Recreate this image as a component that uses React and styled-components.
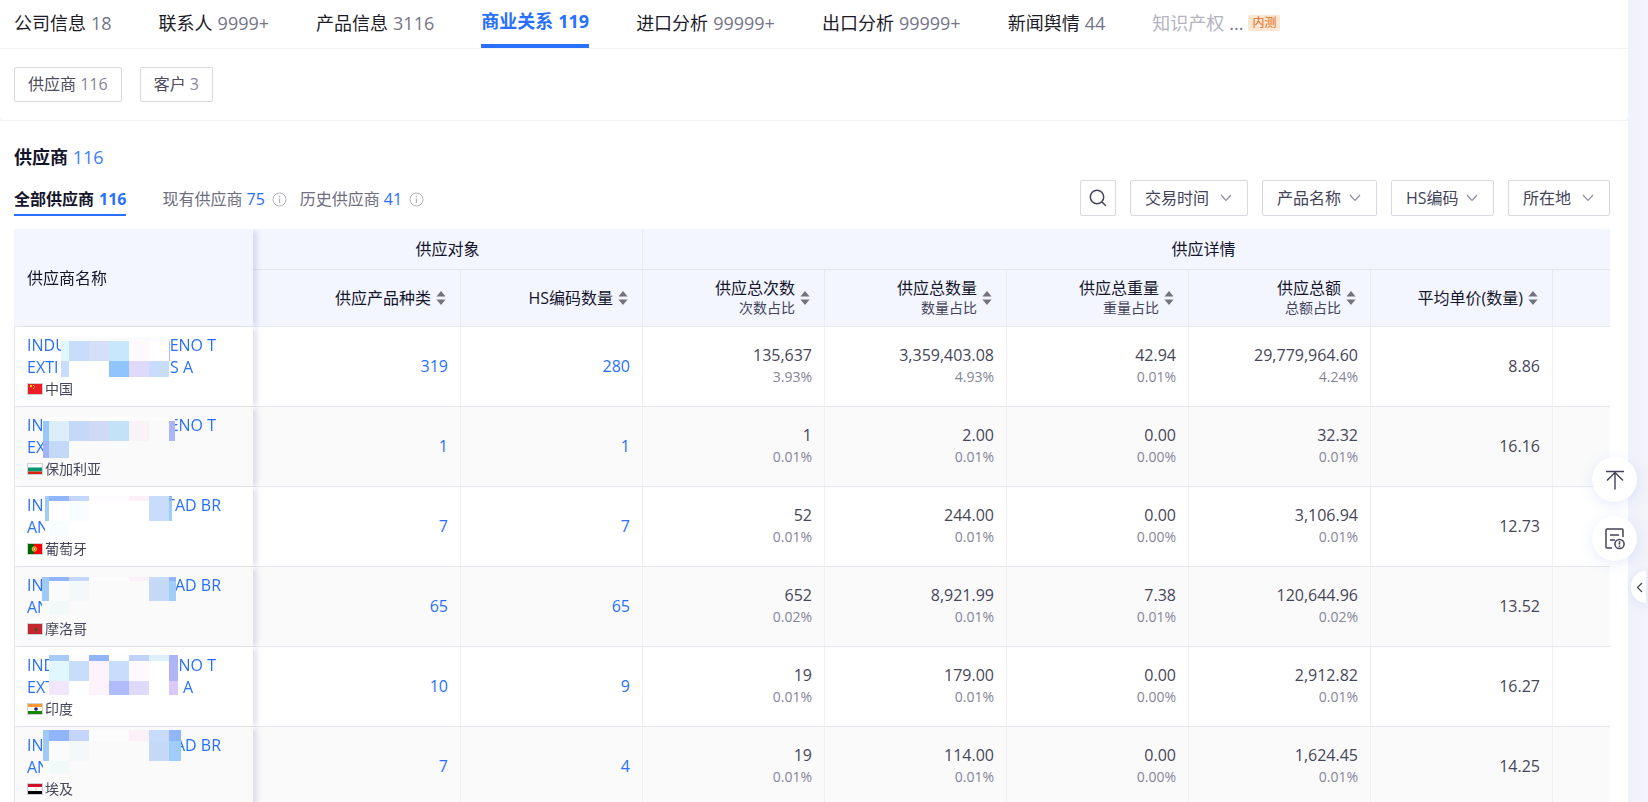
import React from "react";
import styled, { createGlobalStyle, css } from "styled-components";

const GlobalStyle = createGlobalStyle`
  *, *::before, *::after { box-sizing: border-box; }
  html, body { margin: 0; height: 100%; }
  body {
    background: #f1f3fa;
    color: #14142b;
    font: 400 16px/22px "Open Sans", "Noto Sans CJK SC", sans-serif;
  }
  #root { height: 100%; }
  button, select { font: inherit; color: inherit; margin: 0; }
  a { color: inherit; text-decoration: none; }
`;

const Page = styled.div`
  height: 100vh;
  padding-right: 18px;
  border-right: 2px solid #f3f3f8;
  overflow: hidden auto;
  scrollbar-width: none;
`;

const TopPanel = styled.header`
  background: #fff;
  border-bottom: 1px solid #f3f3f5;
  border-radius: 0 0 4px 4px;
`;

const Tabs = styled.nav`
  display: flex;
  gap: 47px;
  height: 49px;
  padding: 0 14px;
  border-bottom: 1px solid #f3f3f5;
  font-size: 18px;
  white-space: nowrap;
`;

const Tab = styled.a`
  display: flex;
  align-items: center;
  gap: 5px;
  height: 48px;
  padding-bottom: 2px;
  color: ${(p) => (p.$disabled ? "#b3b3c2" : "#1c1c28")};
  ${(p) =>
    p.$active &&
    css`
      color: #2970ff;
      font-weight: 700;
      border-bottom: 4px solid #2970ff;
    `}
`;

const TabCount = styled.span`
  color: ${(p) => (p.$active ? "#2970ff" : "#757589")};
`;

const Badge = styled.span`
  padding: 0 4px;
  border-radius: 2px;
  background: #fde6d2;
  color: #e06c12;
  font-size: 12px;
  line-height: 16px;
`;

const Chips = styled.div`
  display: flex;
  gap: 18px;
  padding: 18px 14px;
`;

const Chip = styled.button`
  height: 35px;
  padding: 0 13px 2px;
  border: 1px solid #d9d9df;
  border-radius: 2px;
  background: #fff;
  color: #4d4d5c;
  cursor: pointer;
  span { color: #86869a; }
`;

const Panel = styled.main`
  background: #fff;
  padding: 24px 18px 0 14px;
`;

const Title = styled.h2`
  margin: 0;
  font-size: 18px;
  line-height: 24px;
  font-weight: 700;
  span { color: #3d7eff; font-weight: 400; }
`;

const Toolbar = styled.div`
  display: flex;
  justify-content: space-between;
  margin: 11px 0 13px;
`;

const SubTabs = styled.div`
  display: flex;
  align-items: flex-start;
  padding-top: 6px;
`;

const SubTab = styled.button`
  display: flex;
  align-items: center;
  gap: ${(p) => (p.$active ? 5 : 4)}px;
  height: 30px;
  margin-right: ${(p) => (p.$active ? 36 : 13)}px;
  padding: 0 0 2px;
  border: 0;
  border-bottom: 2px solid ${(p) => (p.$active ? "#2970ff" : "transparent")};
  background: none;
  color: ${(p) => (p.$active ? "#14142b" : "#6e6e80")};
  font-weight: ${(p) => (p.$active ? 700 : 400)};
  white-space: nowrap;
  cursor: pointer;
  span { color: #2970ff; }
  svg { margin-left: 3px; }
`;

const Filters = styled.div`
  display: flex;
  gap: 14px;
`;

const boxed = css`
  height: 36px;
  border: 1px solid #d8d8e2;
  border-radius: 2px;
  background: #fff;
`;

const SearchButton = styled.button`
  ${boxed}
  display: grid;
  place-items: center;
  width: 36px;
  padding: 0;
  cursor: pointer;
`;

const FilterBox = styled.label`
  ${boxed}
  display: grid;
  align-items: center;
  color: #43435a;
  > * { grid-area: 1 / 1; }
  svg { justify-self: end; margin-right: 15px; pointer-events: none; }
`;

const FilterSelect = styled.select`
  appearance: none;
  height: 34px;
  padding: 0 ${(p) => (p.$roomy ? 37 : 34)}px 0 14px;
  border: 0;
  background: transparent;
  cursor: pointer;
`;

const TableScroll = styled.div`
  overflow-x: auto;
  scrollbar-width: none;
`;

const Table = styled.table`
  width: 1751px;
  table-layout: fixed;
  border-collapse: separate;
  border-spacing: 0;
`;

const Th = styled.th`
  height: ${(p) => (p.$group ? 41 : 57)}px;
  padding: 0 14px;
  border-right: 1px solid #e8ebf5;
  border-bottom: 1px solid #e4e6f0;
  background: #f3f6ff;
  font-weight: 400;
  text-align: ${(p) => (p.$group ? "center" : "right")};
`;

const pinned = css`
  position: sticky;
  left: 0;
  z-index: 1;
  padding: 0 13px;
  border-right: 0;
  text-align: left;
  box-shadow: 6px 0 5px -2px rgba(70, 85, 140, 0.17);
`;

const PinnedTh = styled(Th)`${pinned}`;

const Row = styled.tr`
  background: ${(p) => (p.$striped ? "#fafafa" : "#fff")};
`;

const Td = styled.td`
  height: 80px;
  padding: 0 12px 2px;
  border-right: 1px solid #f0f0f4;
  border-bottom: 1px solid #e6e6ec;
  text-align: right;
  color: #46465a;
  a { color: #2970ff; }
`;

const PinnedTd = styled(Td)`
  ${pinned}
  padding-left: 12px;
  border-left: 1px solid #e6e6ec;
  background: inherit;
`;

const HeadCell = styled.div`
  display: flex;
  align-items: center;
  justify-content: flex-end;
  gap: 5px;
`;

const SortButton = styled.button`
  display: flex;
  padding: 0;
  border: 0;
  background: none;
  cursor: pointer;
`;

const HeadLabel = styled.div`
  line-height: 20px;
`;

const SubLine = styled.div`
  font-size: 14px;
  line-height: ${(p) => (p.$head ? 20 : 22)}px;
  color: ${(p) => (p.$head ? "#43435a" : "#85859a")};
`;

const Name = styled.a`
  display: block;
  position: relative;
`;

const NameLine = styled.span`
  display: flex;
  justify-content: space-between;
  width: ${(p) => p.$w}px;
  height: 22px;
`;

const Mosaic = styled.svg`
  position: absolute;
  left: 0;
  top: -5px;
`;

const Country = styled.div`
  display: flex;
  align-items: center;
  gap: 2px;
  font-size: 14px;
`;

const FloatBar = styled.aside`
  position: fixed;
  right: 11px;
  top: 457px;
  z-index: 3;
  display: grid;
  gap: 14px;
`;

const FloatButton = styled.button`
  display: grid;
  place-items: center;
  width: 45px;
  height: 45px;
  padding: 0;
  border: 0;
  border-radius: 50%;
  background: #fff;
  box-shadow: 0 3px 14px rgba(80, 120, 230, 0.14);
  cursor: pointer;
`;

const Drawer = styled.button`
  position: fixed;
  right: 2px;
  top: 571px;
  z-index: 2;
  display: grid;
  place-items: center end;
  width: 15px;
  height: 32px;
  padding: 0 3px 0 0;
  border: 0;
  border-radius: 16px 0 0 16px;
  background: #fff;
  box-shadow: 0 2px 10px rgba(80, 120, 230, 0.14);
  cursor: pointer;
`;

const Info = () => (
  <svg width="15" height="15" viewBox="0 0 15 15" fill="none" stroke="#b3b3c0">
    <circle cx="7.5" cy="7.5" r="6.5" />
    <path d="M7.5 6.5v4.5M7.5 3.8v1.4" strokeWidth="1.2" />
  </svg>
);

const Chevron = () => (
  <svg width="12" height="8" viewBox="0 0 12 8" fill="none" stroke="#8d8d9f" strokeWidth="1.2">
    <path d="M1 1l5 5.4L11 1" />
  </svg>
);

const SortIcon = () => (
  <svg width="10" height="14" viewBox="0 0 10 14" fill="#73737f">
    <path d="M5 0l4.6 5.6H.4zM5 14L.4 8.4h9.2z" />
  </svg>
);

const flags = {
  cn: (
    <>
      <path fill="#ee1c25" d="M0 0h14v10H0z" />
      <path fill="#ffde00" d="M2 1h2v2H2zM5 1h1v1H5zM6 2.500h1v1H6zM5 4h1v1H5z" />
    </>
  ),
  bg: (
    <>
      <path fill="#fff" d="M0 0h14v3.500H0z" />
      <path fill="#00966e" d="M0 3.500h14v4H0z" />
      <path fill="#d62612" d="M0 7.500h14V10H0z" />
    </>
  ),
  pt: (
    <>
      <path fill="#f00" d="M0 0h14v10H0z" />
      <path fill="#060" d="M0 0h6v10H0z" />
      <circle cx="6.300" cy="5" r="2.200" fill="#ef4a2a" stroke="#e6dc20" />
      <path fill="#fff" d="M5.800 4h1v2h-1z" />
    </>
  ),
  ma: (
    <>
      <path fill="#c1272d" d="M0 0h14v10H0z" />
      <path fill="#4b4a2e" d="M8 3l.8 1.500 1 .5-.8.800-.2 1.700-1-.8-1.200.3.400-1.700-.6-.8h1.200z" />
    </>
  ),
  in: (
    <>
      <path fill="#fff" d="M0 0h14v10H0z" />
      <path fill="#f93" d="M0 0h14v3H0z" />
      <path fill="#138808" d="M0 7h14v3H0z" />
      <circle cx="8" cy="5" r="1.800" fill="#1b1b7c" />
    </>
  ),
  eg: (
    <>
      <path fill="#fff" d="M0 0h14v10H0z" />
      <path fill="#ce1126" d="M0 0h14v3H0z" />
      <path d="M0 7h14v3H0z" />
      <path fill="#f0dfae" d="M7 4h2v2.500H7z" />
    </>
  ),
};

const Flag = ({ code }) => (
  <svg width="16" height="12" viewBox="-1 -1 16 12">
    {flags[code]}
    <rect x="-.5" y="-.5" width="15" height="11" fill="none" stroke="#cfcfd6" />
  </svg>
);

/* Each band is [top, bottom, [x, colour], ..., end x]; a colour runs to the next x. */
const Mask = ({ bands }) => (
  <Mosaic width="170" height="60" viewBox="0 -6 170 60" shapeRendering="crispEdges" aria-hidden="true">
    {bands.flatMap(([y0, y1, stops, end]) =>
      stops.map(([x, fill], i) => (
        <rect
          key={y0 + "-" + x}
          x={x}
          y={y0}
          width={(i + 1 < stops.length ? stops[i + 1][0] : end) - x}
          height={y1 - y0}
          fill={fill}
        />
      ))
    )}
  </Mosaic>
);

const suppliers = [
  {
    top: ["INDU", "ENO T", 189], bottom: ["EXTI", "S A", 166], flag: "cn", country: "中国",
    kinds: "319", codes: "280", stats: [["135,637", "3.93%"], ["3,359,403.08", "4.93%"], ["42.94", "0.01%"], ["29,779,964.60", "4.24%"]], price: "8.86",
    bands: [
      [2, 6, [[34, "#fafbff"]], 143],
      [6, 26, [[34, "#e0f7fe"], [42, "#c8dcfb"], [62, "#d6dffa"], [82, "#c8e7fc"], [102, "#fef9fd"], [122, "#fff"], [142, "#b4b9f8"]], 143],
      [26, 42, [[34, "#c8dcfb"], [42, "#fff"], [62, "#fffffe"], [82, "#90c4fc"], [102, "#e0dafa"], [122, "#c8dcfb"]], 142],
    ],
  },
  {
    top: ["IN", "ENO T", 189], bottom: ["EX", "", 166], flag: "bg", country: "保加利亚",
    kinds: "1", codes: "1", stats: [["1", "0.01%"], ["2.00", "0.01%"], ["0.00", "0.00%"], ["32.32", "0.01%"]], price: "16.16",
    bands: [
      [2, 6, [[16, "#fcfcfc"]], 148],
      [6, 26, [[16, "#97c8f9"], [22, "#dceefa"], [42, "#c4d8f8"], [62, "#d0daf6"], [82, "#c3e2f8"], [102, "#f9f3f7"], [122, "#fafafa"], [142, "#aeb5f7"]], 148],
      [26, 43, [[16, "#a0b5f6"], [22, "#c4d8f8"], [42, "#fafafa"]], 142],
    ],
  },
  {
    top: ["IN", "TAD BR", 194], bottom: ["AN", "", 166], flag: "pt", country: "葡萄牙",
    kinds: "7", codes: "7", stats: [["52", "0.01%"], ["244.00", "0.01%"], ["0.00", "0.00%"], ["3,106.94", "0.01%"]], price: "12.73",
    bands: [
      [1, 6, [[18, "#9fcdfa"], [22, "#90b6f9"], [42, "#c4d6fb"], [62, "#fdfbfd"], [102, "#fcf0fb"], [122, "#c8dcfb"], [142, "#90b6f9"]], 145],
      [6, 26, [[18, "#9fcdfa"], [22, "#fff"], [42, "#f8feff"], [62, "#fff"], [122, "#c8dcfb"], [142, "#9fcdfa"]], 145],
      [26, 41, [[18, "#fff"], [22, "#f8feff"], [42, "#fff"]], 145],
    ],
  },
  {
    top: ["IN", "AD BR", 194], bottom: ["AN", "", 166], flag: "ma", country: "摩洛哥",
    kinds: "65", codes: "65", stats: [["652", "0.02%"], ["8,921.99", "0.01%"], ["7.38", "0.01%"], ["120,644.96", "0.02%"]], price: "13.52",
    bands: [
      [2, 6, [[15, "#9fcaf7"], [22, "#90b6f9"], [42, "#c4d6fb"], [62, "#fcfcfd"], [102, "#fcf0f9"], [122, "#c8dbfa"], [142, "#90b6f9"]], 149],
      [6, 26, [[15, "#9fcaf7"], [22, "#fafbfb"], [42, "#f3f9fa"], [62, "#fafafa"], [122, "#c4d8f8"], [142, "#a0ccf8"]], 149],
      [26, 40, [[15, "#fafafa"], [22, "#f2f9f9"], [42, "#fafafa"]], 149],
    ],
  },
  {
    top: ["IND", "NO T", 189], bottom: ["EXT", "A", 166], flag: "in", country: "印度",
    kinds: "10", codes: "9", stats: [["19", "0.01%"], ["179.00", "0.01%"], ["0.00", "0.00%"], ["2,912.82", "0.01%"]], price: "16.27",
    bands: [
      [0, 6, [[22, "#a6cbf8"], [42, "#fdfdfe"], [62, "#90b6f9"], [82, "#fdfcff"], [102, "#c0d2fa"], [122, "#dff0fd"], [142, "#aeb5f7"]], 151],
      [6, 26, [[22, "#e0f7fe"], [42, "#c8dcfb"], [62, "#fef3fc"], [82, "#c8dcfb"], [102, "#fef9fd"], [122, "#fff"], [142, "#b0b5f8"]], 151],
      [26, 40, [[22, "#f2e6fa"], [42, "#fff"], [62, "#fef3fc"], [82, "#b0bcfa"], [102, "#e0dafa"], [122, "#fff"], [142, "#dac8f9"]], 151],
    ],
  },
  {
    top: ["IN", "AD BR", 194], bottom: ["AN", "", 166], flag: "eg", country: "埃及",
    kinds: "7", codes: "4", stats: [["19", "0.01%"], ["114.00", "0.01%"], ["0.00", "0.00%"], ["1,624.45", "0.01%"]], price: "14.25",
    bands: [
      [-5, 6, [[16, "#9fcaf7"], [22, "#90b6f9"], [42, "#c4d4fb"], [62, "#fcfcfd"], [102, "#fcf0f9"], [122, "#c8dbfa"], [142, "#90b6f9"]], 154],
      [6, 26, [[16, "#9fcaf7"], [22, "#fafbfb"], [42, "#f3f9fa"], [62, "#fafafa"], [122, "#c4d8f8"], [142, "#a0ccf8"]], 154],
      [26, 38, [[16, "#fafafa"], [22, "#f2f9f9"], [42, "#fafafa"]], 154],
    ],
  },
];

const tabs = [
  ["公司信息", "18"],
  ["联系人", "9999+"],
  ["产品信息", "3116"],
  ["商业关系", "119", true],
  ["进口分析", "99999+"],
  ["出口分析", "99999+"],
  ["新闻舆情", "44"],
];

const columns = [
  ["供应产品种类"],
  ["HS编码数量"],
  ["供应总次数", "次数占比"],
  ["供应总数量", "数量占比"],
  ["供应总重量", "重量占比"],
  ["供应总额", "总额占比"],
  ["平均单价(数量)"],
];

const filters = [["交易时间", true], ["产品名称"], ["HS编码"], ["所在地", true]];

const Supplier = ({ data, striped }) => (
  <Row $striped={striped}>
    <PinnedTd>
      <Name href="#">
        <NameLine $w={data.top[2]}><span>{data.top[0]}</span><span>{data.top[1]}</span></NameLine>
        <NameLine $w={data.bottom[2]}><span>{data.bottom[0]}</span><span>{data.bottom[1]}</span></NameLine>
        <Mask bands={data.bands} />
      </Name>
      <Country><Flag code={data.flag} />{data.country}</Country>
    </PinnedTd>
    <Td><a href="#">{data.kinds}</a></Td>
    <Td><a href="#">{data.codes}</a></Td>
    {data.stats.map(([value, share], i) => (
      <Td key={i}>{value}<SubLine>{share}</SubLine></Td>
    ))}
    <Td>{data.price}</Td>
    <Td />
  </Row>
);

export default function App() {
  return (
    <>
      <GlobalStyle />
      <Page>
        <TopPanel>
          <Tabs>
            {tabs.map(([label, count, active]) => (
              <Tab key={label} href="#" $active={active}>
                {label}<TabCount $active={active}>{count}</TabCount>
              </Tab>
            ))}
            <Tab href="#" $disabled>
              知识产权<TabCount>...</TabCount><Badge>内测</Badge>
            </Tab>
          </Tabs>
          <Chips>
            <Chip>供应商 <span>116</span></Chip>
            <Chip>客户 <span>3</span></Chip>
          </Chips>
        </TopPanel>
        <Panel>
          <Title>供应商 <span>116</span></Title>
          <Toolbar>
            <SubTabs>
              <SubTab $active>全部供应商<span>116</span></SubTab>
              <SubTab>现有供应商<span>75</span><Info /></SubTab>
              <SubTab>历史供应商<span>41</span><Info /></SubTab>
            </SubTabs>
            <Filters>
              <SearchButton aria-label="搜索">
                <svg width="18" height="18" viewBox="0 0 18 18" fill="none" stroke="#43435a" strokeWidth="1.5">
                  <circle cx="8" cy="8" r="6.700" />
                  <path d="M12.800 12.800l4 4" />
                </svg>
              </SearchButton>
              {filters.map(([label, roomy]) => (
                <FilterBox key={label}>
                  <FilterSelect aria-label={label} $roomy={roomy}><option>{label}</option></FilterSelect>
                  <Chevron />
                </FilterBox>
              ))}
            </Filters>
          </Toolbar>
          <TableScroll>
            <Table>
              <colgroup>
                <col style={{ width: 239 }} />
                <col style={{ width: 208 }} />
                {columns.slice(1).map(([label]) => <col key={label} style={{ width: 182 }} />)}
                <col />
              </colgroup>
              <thead>
                <tr>
                  <PinnedTh rowSpan={2}>供应商名称</PinnedTh>
                  <Th $group colSpan={2}>供应对象</Th>
                  <Th $group colSpan={6}>供应详情</Th>
                </tr>
                <tr>
                  {columns.map(([label, sub]) => (
                    <Th key={label}>
                      <HeadCell>
                        <HeadLabel>{label}{sub && <SubLine $head>{sub}</SubLine>}</HeadLabel>
                        <SortButton aria-label={label + "排序"}><SortIcon /></SortButton>
                      </HeadCell>
                    </Th>
                  ))}
                  <Th />
                </tr>
              </thead>
              <tbody>
                {suppliers.map((data, i) => <Supplier key={i} data={data} striped={i % 2 === 1} />)}
              </tbody>
            </Table>
          </TableScroll>
        </Panel>
      </Page>
      <FloatBar>
        <FloatButton aria-label="回到顶部">
          <svg width="20" height="20" viewBox="0 0 20 20" fill="none" stroke="#43435a" strokeWidth="1.400">
            <path d="M1 1.500h18M10 19.500V2.500M2 10.500l8-8 8 8" />
          </svg>
        </FloatButton>
        <FloatButton aria-label="报告">
          <svg width="22" height="22" viewBox="0 0 22 22" fill="none" stroke="#43435a" strokeWidth="1.500">
            <path d="M8 20H3q-1 0-1-1V2q0-1 1-1h15q1 0 1 1v7M6 7h9M6 12h5" />
            <circle cx="15.500" cy="16" r="4.600" />
            <path d="M15.500 13.200v3.400M15.500 17.600v1.400" />
          </svg>
        </FloatButton>
      </FloatBar>
      <Drawer aria-label="展开">
        <svg width="7" height="11" viewBox="0 0 7 11" fill="none" stroke="#43435a" strokeWidth="1.200">
          <path d="M6 1L1.500 5.500 6 10" />
        </svg>
      </Drawer>
    </>
  );
}
